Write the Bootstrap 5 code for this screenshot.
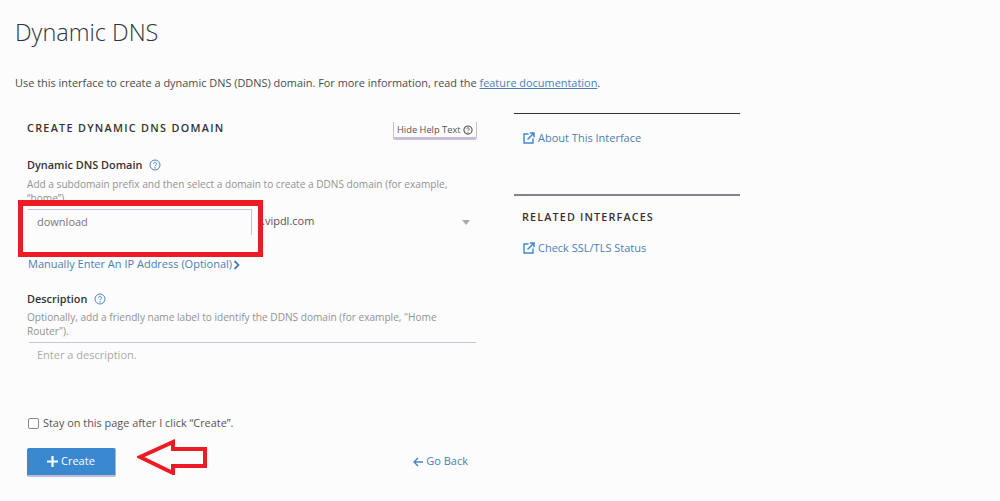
<!DOCTYPE html>
<html lang="en">
<head>
<meta charset="utf-8">
<title>Dynamic DNS</title>
<link rel="stylesheet" href="https://cdn.jsdelivr.net/npm/bootstrap@5.3.0/dist/css/bootstrap.min.css">
<style>
html,body{height:501px;overflow:hidden}
body{background:#fcfcfc;font-family:"Open Sans","Liberation Sans",sans-serif;color:#444;font-size:11px;position:relative}
.page-wrap{padding:0 0 0 15px}
.page-title{font-weight:300;font-size:23.5px;line-height:32px;margin:0;padding-top:16px;color:#2d3440}
.page-intro{font-size:10.93px;line-height:17px;margin:26px 0 0;color:#4b4b4b}
.page-intro a{color:#4a7fb5}
.main-row{margin-top:22px;width:725px;gap:36px}
.form-col{width:451px;margin-left:12px;flex:none}
.side-col{width:226px;flex:none}
.sec-title{font-size:10.8px;font-weight:600;letter-spacing:1.15px;color:#333;margin:0;line-height:16px}
.form-title{margin-top:7px;letter-spacing:1.3px}
.help-btn{font-size:9.3px;line-height:13px;color:#555;border-style:solid;border-color:#c9bdd6;border-width:0 1px 3px;border-radius:0 0 3px 3px;padding:1px 3px 2px;background:none;height:18px;margin:9px 1px 0 0;width:84px;white-space:nowrap}
.q-ico{width:12px;height:12px;vertical-align:-2px}
.help-btn .q-ico{width:10px;height:10px}
.field-label{font-size:10.9px;font-weight:600;color:#333;line-height:16px;margin:0}
.label-one{margin-top:17px}
.label-two{margin-top:19px}
.help-copy{font-size:10.1px;line-height:14px;color:#929292;margin:4px 0 0}
.help-two{margin-top:3px}
.domain-row{margin-top:4px}
.sub-input{width:224px;height:26px;margin-left:1px;border-top:1px solid #c9c3d4;border-right:1px solid #c9c3d4;padding:4px 9px;font-size:11px;color:#777;line-height:16px}
.sub-select{flex:1;font-size:11px;color:#555;padding:4px 0 0 10px;line-height:16px}
.caret-mark{width:0;height:0;border:4px solid transparent;border-top:5px solid #aaa;border-bottom:0;margin:11px 8px 0 0}
.link-blue{color:#4a7fb5;text-decoration:none;font-size:11px;line-height:16px}
.ip-link{margin-top:21px;margin-left:1px}
.ip-chevron{margin-left:-2px}
.desc-input{margin:4px 2px 0 2px;border-top:1px solid #c9c3d4;height:58px;padding:4px 8px;font-size:11px;color:#aaa;line-height:16px}
.stay-row{font-size:10.9px;line-height:16px;color:#555;margin-top:15px;margin-left:1px}
.stay-box{width:11px;height:11px;border:1px solid #888;border-radius:2px;background:#fff;flex:none}
.action-row{margin-top:17px}
.create-btn{width:88px;height:25px;background:#3a88d0;color:#fff;font-size:11px;border-style:solid;border-color:#9db8d6 #9db8d6 #c3bad6 #3a88d0;border-width:0 1px 2px 0;border-radius:2px;padding:0 0 2px;box-sizing:content-box;line-height:24px}
.back-link{margin:0 10px 4px 1px}
.side-rule{border-top:1px solid #333;height:0}
.side-rule-soft{border-top:2px solid #8a7f8c;margin-top:48px}
.ext-ico{width:12px;height:12px;vertical-align:-2px;margin-right:3px}
.about-link{margin:16px 0 0 9px}
.rel-title{margin:13px 0 0 8px}
.ssl-link{margin:15px 0 0 9px}
.note-box{position:absolute;left:18px;top:200px;width:245px;height:57px;border:5px solid #ed1c24;border-top-width:6px}
.note-arrow{position:absolute;left:137px;top:439px}
</style>
</head>
<body>
<div class="page-wrap">
  <h1 class="page-title">Dynamic DNS</h1>
  <p class="page-intro">Use this interface to create a dynamic DNS (DDNS) domain. For more information, read the <a href="#">feature documentation</a>.</p>
  <div class="d-flex main-row">
    <div class="form-col">
      <div class="d-flex justify-content-between align-items-start">
        <h2 class="sec-title form-title">CREATE DYNAMIC DNS DOMAIN</h2>
        <button class="help-btn" type="button">Hide Help Text <svg class="q-ico" viewBox="0 0 12 12"><circle cx="6" cy="6" r="4.9" fill="none" stroke="#555" stroke-width="1.3"/><path d="M4.5 4.8a1.5 1.5 0 1 1 2.3 1.3c-.6.4-.8.6-.8 1.1" fill="none" stroke="#555" stroke-width="1.1"/><circle cx="6" cy="8.7" r=".7" fill="#555"/></svg></button>
      </div>
      <div class="field-label label-one">Dynamic DNS Domain <svg class="q-ico ms-1" viewBox="0 0 12 12"><circle cx="6" cy="6" r="5" fill="none" stroke="#4a86c5" stroke-width="1"/><path d="M4.5 4.8a1.5 1.5 0 1 1 2.3 1.3c-.6.4-.8.6-.8 1.1" fill="none" stroke="#4a86c5" stroke-width="1"/><circle cx="6" cy="8.7" r=".7" fill="#4a86c5"/></svg></div>
      <p class="help-copy">Add a subdomain prefix and then select a domain to create a DDNS domain (for example, “home”).</p>
      <div class="d-flex domain-row">
        <div class="sub-input">download</div>
        <div class="sub-select">.vipdl.com</div>
        <div class="caret-mark"></div>
      </div>
      <a class="link-blue d-block ip-link" href="#">Manually Enter An IP Address (Optional) <svg class="ip-chevron" width="7" height="10" viewBox="0 0 7 10"><path d="M1.5 1l4 4-4 4" fill="none" stroke="#4a7fb5" stroke-width="1.8"/></svg></a>
      <div class="field-label label-two">Description <svg class="q-ico ms-1" viewBox="0 0 12 12"><circle cx="6" cy="6" r="5" fill="none" stroke="#4a86c5" stroke-width="1"/><path d="M4.5 4.8a1.5 1.5 0 1 1 2.3 1.3c-.6.4-.8.6-.8 1.1" fill="none" stroke="#4a86c5" stroke-width="1"/><circle cx="6" cy="8.7" r=".7" fill="#4a86c5"/></svg></div>
      <p class="help-copy help-two">Optionally, add a friendly name label to identify the DDNS domain (for example, "Home Router").</p>
      <div class="desc-input">Enter a description.</div>
      <div class="d-flex align-items-center gap-1 stay-row"><span class="stay-box"></span>Stay on this page after I click “Create”.</div>
      <div class="d-flex justify-content-between align-items-center action-row">
        <button class="create-btn" type="button"><svg width="11" height="11" viewBox="0 0 11 11"><path d="M5.5 0v11M0 5.5h11" stroke="#fff" stroke-width="2.2"/></svg> Create</button>
        <a class="link-blue back-link" href="#"><svg width="10" height="10" viewBox="0 0 10 10"><path d="M5 1L1 5l4 4M1 5h9" fill="none" stroke="#4a86c5" stroke-width="1.4"/></svg> Go Back</a>
      </div>
    </div>
    <div class="side-col">
      <div class="side-rule"></div>
      <a class="link-blue d-block about-link" href="#"><svg class="ext-ico" viewBox="0 0 12 12"><path d="M5.5 2H1v9h9V6.5" fill="none" stroke="#3f86cc" stroke-width="1.4"/><path d="M4.5 7.5L10 2M6.8 1h4.2v4.2" fill="none" stroke="#3f86cc" stroke-width="1.5"/></svg>About This Interface</a>
      <div class="side-rule side-rule-soft"></div>
      <h2 class="sec-title rel-title">RELATED INTERFACES</h2>
      <a class="link-blue d-block ssl-link" href="#"><svg class="ext-ico" viewBox="0 0 12 12"><path d="M5.5 2H1v9h9V6.5" fill="none" stroke="#3f86cc" stroke-width="1.4"/><path d="M4.5 7.5L10 2M6.8 1h4.2v4.2" fill="none" stroke="#3f86cc" stroke-width="1.5"/></svg>Check SSL/TLS Status</a>
    </div>
  </div>
</div>
<div class="note-box"></div>
<svg class="note-arrow" width="72" height="36" viewBox="0 0 72 36"><path d="M3 18L36 3v7h32v17H36v7z" fill="none" stroke="#ed1c24" stroke-width="4"/></svg>
<script src="https://cdn.jsdelivr.net/npm/bootstrap@5.3.0/dist/js/bootstrap.bundle.min.js"></script>
</body>
</html>
